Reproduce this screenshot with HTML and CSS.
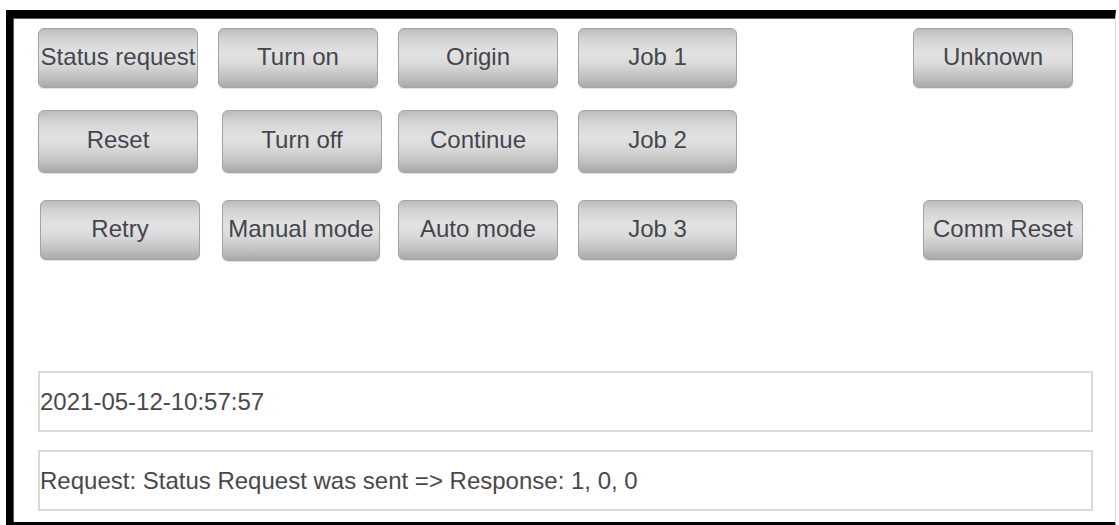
FILE: index.html
```html
<!DOCTYPE html>
<html lang="en">
<head>
<meta charset="utf-8">
<title>Controller panel</title>
<link rel="stylesheet" href="styles.css">
</head>
<body>
<div class="frame">
  <div class="panel">
    <div class="btn-row row-1">
      <button class="btn">Status request</button>
      <button class="btn">Turn on</button>
      <button class="btn">Origin</button>
      <button class="btn btn-narrow">Job 1</button>
      <button class="btn btn-far">Unknown</button>
    </div>
    <div class="btn-row row-2">
      <button class="btn btn-tall">Reset</button>
      <button class="btn btn-tall shift-r">Turn off</button>
      <button class="btn btn-tall pull-l">Continue</button>
      <button class="btn btn-tall btn-narrow">Job 2</button>
    </div>
    <div class="btn-row row-3">
      <button class="btn shift-r2">Retry</button>
      <button class="btn btn-short shift-r2 btn-slim">Manual mode</button>
      <button class="btn pull-l2">Auto mode</button>
      <button class="btn btn-narrow">Job 3</button>
      <button class="btn btn-far-2">Comm Reset</button>
    </div>

    <div class="log">
      <div class="field">2021-05-12-10:57:57</div>
      <div class="field">Request: Status Request was sent =&gt; Response: 1, 0, 0</div>
    </div>
  </div>
</div>
</body>
</html>
```

FILE: styles.css
```css
html, body {
  margin: 0;
  padding: 0;
  background: #ffffff;
  overflow: hidden;
}

body {
  width: 1119px;
  height: 525px;
  font-family: "Liberation Sans", Arial, sans-serif;
}

/* window frame: heavy black rule on top, left and bottom, light edge on the right */
.frame {
  margin: 10px 0 0 6px;
  width: 1102px;
  height: 504px;
  border-top: 8px solid #000;
  border-left: 7px solid #000;
  border-bottom: 6px solid #000;
  border-right: 1px solid #dcdcdc;
  box-shadow: inset 1px 0 0 #5a5a5a, inset 0 1px 0 #5a5a5a;
  background: #fff;
}

.panel {
  padding: 10px 0 0 25px;
  display: flex;
  flex-direction: column;
}

.btn-row {
  display: flex;
  column-gap: 20px;
  align-items: flex-start;
}

.row-2 { margin-top: 22px; }
.row-3 { margin-top: 27px; }

.btn {
  width: 160px;
  height: 60px;
  margin: 0;
  padding: 0 0 3px 0;
  flex: none;
  border: 1px solid #a3a3a3;
  border-radius: 6px;
  background: linear-gradient(to bottom,
    #bcbcbc 0%,
    #d4d4d4 18%,
    #e2e2e2 42%,
    #dadada 60%,
    #c2c2c2 82%,
    #a8a8a8 100%);
  box-shadow: 0 1px 1px rgba(0, 0, 0, 0.12);
  font-family: "Liberation Sans", Arial, sans-serif;
  font-size: 24px;
  color: #45454d;
  text-align: center;
  white-space: nowrap;
}

.btn-tall { height: 63px; }
.btn-short { height: 61px; }
.btn-narrow { width: 159px; }
.btn-slim { width: 158px; }

/* small irregularities in the hand-placed button grid */
.shift-r { margin-left: 4px; }
.shift-r2 { margin-left: 2px; }
.pull-l { margin-left: -4px; }
.pull-l2 { margin-left: -2px; }

.btn-far { margin-left: 156px; }
.btn-far-2 { margin-left: 166px; }

/* status / message read-outs */
.log {
  margin-top: 110px;
  display: flex;
  flex-direction: column;
  row-gap: 18px;
  width: 1055px;
}

.field {
  height: 57px;
  border: 2px solid #d9d9d9;
  display: flex;
  align-items: center;
  padding-left: 0;
  font-size: 24px;
  color: #48484c;
  white-space: nowrap;
}
```
